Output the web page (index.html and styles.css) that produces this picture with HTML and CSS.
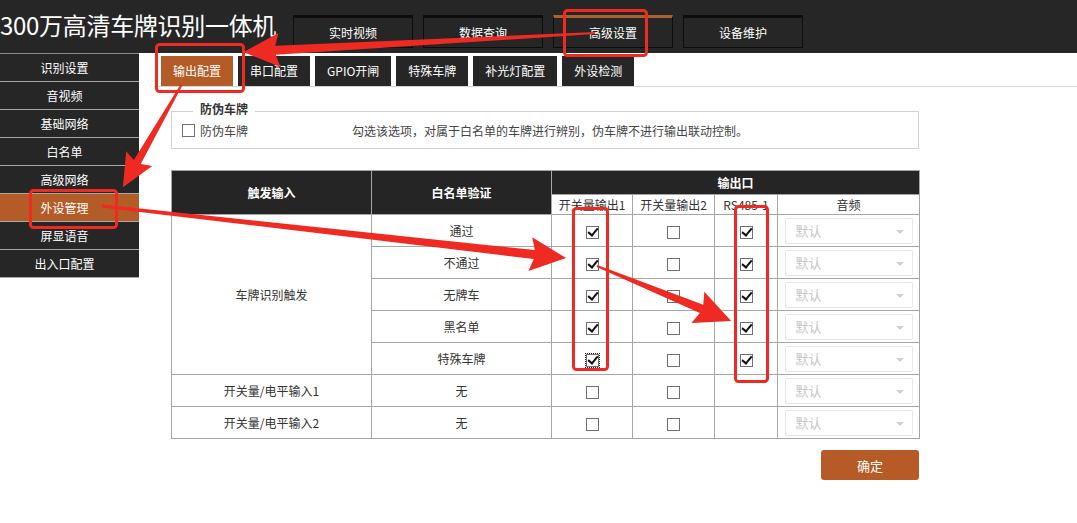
FILE: index.html
```html
<!DOCTYPE html>
<html lang="zh-CN">
<head>
    <meta charset="UTF-8">
    <title>300万高清车牌识别一体机</title>
    <link rel="stylesheet" href="styles.css">
</head>
<body>
    <div class="page">
        <header class="topbar">
            <h1 class="title">300万高清车牌识别一体机</h1>
            <nav class="topnav">
                <a class="topnav-item">实时视频</a>
                <a class="topnav-item">数据查询</a>
                <a class="topnav-item active">高级设置</a>
                <a class="topnav-item">设备维护</a>
            </nav>
        </header>

        <div class="main">
            <ul class="sidebar">
                <li>识别设置</li>
                <li>音视频</li>
                <li>基础网络</li>
                <li>白名单</li>
                <li>高级网络</li>
                <li class="active">外设管理</li>
                <li>屏显语音</li>
                <li>出入口配置</li>
            </ul>

            <div class="content">
                <div class="tabs">
                    <span class="tab active">输出配置</span>
                    <span class="tab">串口配置</span>
                    <span class="tab">GPIO开闸</span>
                    <span class="tab">特殊车牌</span>
                    <span class="tab">补光灯配置</span>
                    <span class="tab">外设检测</span>
                </div>

                <div class="panel">
                    <fieldset class="box">
                        <legend>防伪车牌</legend>
                        <div class="box-row">
                            <label class="box-label"><input type="checkbox" class="chk"> 防伪车牌</label>
                            <span class="hint">勾选该选项，对属于白名单的车牌进行辨别，伪车牌不进行输出联动控制。</span>
                        </div>
                    </fieldset>

                    <table class="grid">
                        <colgroup>
                            <col style="width:200px">
                            <col style="width:180px">
                            <col style="width:81px">
                            <col style="width:82px">
                            <col style="width:63px">
                            <col style="width:142px">
                        </colgroup>
                        <thead>
                            <tr class="head-top">
                                <th rowspan="2">触发输入</th>
                                <th rowspan="2">白名单验证</th>
                                <th colspan="4">输出口</th>
                            </tr>
                            <tr class="head-sub">
                                <td>开关量输出1</td>
                                <td>开关量输出2</td>
                                <td>RS485-1</td>
                                <td>音频</td>
                            </tr>
                        </thead>
                        <tbody>
                            <tr>
                                <td rowspan="5">车牌识别触发</td>
                                <td>通过</td>
                                <td><input type="checkbox" class="chk" checked></td>
                                <td><input type="checkbox" class="chk"></td>
                                <td><input type="checkbox" class="chk" checked></td>
                                <td><div class="select">默认</div></td>
                            </tr>
                            <tr>
                                <td>不通过</td>
                                <td><input type="checkbox" class="chk" checked></td>
                                <td><input type="checkbox" class="chk"></td>
                                <td><input type="checkbox" class="chk" checked></td>
                                <td><div class="select">默认</div></td>
                            </tr>
                            <tr>
                                <td>无牌车</td>
                                <td><input type="checkbox" class="chk" checked></td>
                                <td><input type="checkbox" class="chk"></td>
                                <td><input type="checkbox" class="chk" checked></td>
                                <td><div class="select">默认</div></td>
                            </tr>
                            <tr>
                                <td>黑名单</td>
                                <td><input type="checkbox" class="chk" checked></td>
                                <td><input type="checkbox" class="chk"></td>
                                <td><input type="checkbox" class="chk" checked></td>
                                <td><div class="select">默认</div></td>
                            </tr>
                            <tr>
                                <td>特殊车牌</td>
                                <td><input type="checkbox" class="chk focus" checked></td>
                                <td><input type="checkbox" class="chk"></td>
                                <td><input type="checkbox" class="chk" checked></td>
                                <td><div class="select">默认</div></td>
                            </tr>
                            <tr>
                                <td>开关量/电平输入1</td>
                                <td>无</td>
                                <td><input type="checkbox" class="chk"></td>
                                <td><input type="checkbox" class="chk"></td>
                                <td></td>
                                <td><div class="select">默认</div></td>
                            </tr>
                            <tr>
                                <td>开关量/电平输入2</td>
                                <td>无</td>
                                <td><input type="checkbox" class="chk"></td>
                                <td><input type="checkbox" class="chk"></td>
                                <td></td>
                                <td><div class="select">默认</div></td>
                            </tr>
                        </tbody>
                    </table>

                    <div class="actions">
                        <button class="btn">确定</button>
                    </div>
                </div>
            </div>
        </div>

        <!-- red annotation marks drawn over the page -->
        <svg class="marks" width="1077" height="523" viewBox="0 0 1077 523">
            <g class="mark-box">
                <rect x="564.5" y="10.5" width="82" height="45" rx="3"></rect>
                <rect x="156.5" y="44.5" width="87" height="47" rx="3"></rect>
                <rect x="30.5" y="190.5" width="86" height="37" rx="3"></rect>
                <rect x="573.5" y="208.5" width="34" height="161" rx="3"></rect>
                <rect x="735.5" y="206.5" width="32" height="175" rx="3"></rect>
            </g>
            <g class="mark-arrow">
                <polygon transform="translate(595 33) rotate(176.9)" points="0,-1 320,-4.5 316,-17 352,0 316,17 320,4.5 0,1"></polygon>
                <polygon transform="translate(182 84) rotate(119.8)" points="0,-1 90,-4 86,-15 119,0 86,15 90,4 0,1"></polygon>
                <polygon transform="translate(102 206) rotate(6.4)" points="0,-1.5 435,-4.5 431,-17 467,0 431,17 435,4.5 0,1.5"></polygon>
                <polygon transform="translate(597 266) rotate(22.3)" points="0,-1 113,-4.5 109,-17 145,0 109,17 113,4.5 0,1"></polygon>
            </g>
        </svg>
    </div>
</body>
</html>
```

FILE: styles.css
```css
/* Global */
body {
    margin: 0;
    font-family: "Noto Sans CJK SC", "Noto Sans", sans-serif;
    font-size: 12px;
    color: #333;
    background: #fff;
}

.page {
    position: relative;
    width: 1077px;
    height: 523px;
    overflow: hidden;
}

/* Top bar */
.topbar {
    display: flex;
    height: 53px;
    background-color: #262626;
}

.title {
    flex: none;
    width: 293px;
    margin: 0;
    font-size: 24px;
    font-weight: normal;
    line-height: 50px;
    color: #fff;
    white-space: nowrap;
    letter-spacing: -0.3px;
}

.topnav {
    display: flex;
    gap: 10px;
    align-self: flex-end;
    margin-bottom: 5px;
}

.topnav-item {
    box-sizing: border-box;
    width: 120px;
    height: 33px;
    border: 1px solid #0d0d0d;
    border-top: 3px solid #0d0d0d;
    color: #fff;
    font-size: 12px;
    line-height: 29px;
    text-align: center;
}

.topnav-item.active {
    border-top-color: #a9612f;
}

/* Sidebar + content */
.main {
    display: flex;
    align-items: flex-start;
}

.sidebar {
    flex: none;
    width: 139px;
    margin: 0;
    padding: 0;
    list-style: none;
    background-color: #262626;
    border-top: 1px solid #8a8a8a;
}

.sidebar li {
    height: 27px;
    border-bottom: 1px solid #a8a8a8;
    color: #fff;
    line-height: 27px;
    text-align: center;
    padding-right: 10px;
}

.sidebar li.active {
    background-color: #b45c27;
}

.content {
    flex: 1;
    padding-left: 15px;
}

.tabs {
    display: flex;
    gap: 5px;
    padding: 3px 0 0 7px;
    border-bottom: 1px solid #d4d4d4;
}

.tab {
    height: 30px;
    padding: 0 12px;
    background-color: #262626;
    color: #fff;
    line-height: 30px;
}

.tab.active {
    background-color: #b45c27;
}

.panel {
    width: 748px;
    padding: 0 17px;
}

/* Fieldset */
.box {
    margin: 13px 0 0;
    padding: 0 10px 9px;
    border: 1px solid #d2d2d2;
}

.box legend {
    margin-left: 11px;
    padding: 0 7px 5px;
    font-weight: bold;
    line-height: 17px;
    color: #333;
}

.box-row {
    display: flex;
    align-items: center;
    height: 17px;
}

.box-label {
    display: flex;
    align-items: center;
    gap: 5px;
    width: 170px;
    color: #444;
}

.hint {
    color: #444;
}

/* Checkbox */
.chk {
    appearance: none;
    -webkit-appearance: none;
    position: relative;
    box-sizing: border-box;
    width: 13px;
    height: 13px;
    margin: 0;
    border: 1px solid #707070;
    background: #fff;
    vertical-align: middle;
}

.chk:checked::after {
    content: '';
    position: absolute;
    left: 3px;
    top: -1px;
    width: 4px;
    height: 8px;
    border: solid #111;
    border-width: 0 2px 2px 0;
    transform: rotate(40deg);
}

.chk.focus {
    outline: 1px dotted #222;
    outline-offset: 0;
}

/* Table */
.grid {
    width: 748px;
    margin-top: 21px;
    border-collapse: collapse;
    table-layout: fixed;
    text-align: center;
}

.grid th,
.grid td {
    padding: 0;
    border: 1px solid #a6a6a6;
}

.grid th {
    background-color: #252525;
    color: #fff;
    font-weight: bold;
}

.head-top th {
    height: 23px;
}

.head-sub td {
    height: 19px;
    line-height: 19px;
}

.grid tbody td {
    height: 31px;
}

.select {
    position: relative;
    box-sizing: border-box;
    width: 128px;
    height: 26px;
    margin: 0 auto;
    padding-left: 10px;
    border: 1px solid #e6e6e6;
    border-radius: 2px;
    color: #c6c6c6;
    font-size: 13px;
    line-height: 24px;
    text-align: left;
}

.select::after {
    content: '';
    position: absolute;
    right: 8px;
    top: 11px;
    border-left: 4px solid transparent;
    border-right: 4px solid transparent;
    border-top: 4px solid #d0d0d0;
}

/* Button */
.actions {
    display: flex;
    justify-content: flex-end;
    margin-top: 11px;
}

.btn {
    width: 98px;
    height: 30px;
    border: none;
    border-radius: 3px;
    background-color: #b65b27;
    color: #fff;
    font-family: inherit;
    font-size: 13px;
}

/* Annotation overlay */
.marks {
    position: absolute;
    left: 0;
    top: 0;
    pointer-events: none;
}

.mark-box rect {
    fill: none;
    stroke: #ee2a22;
    stroke-width: 3;
}

.mark-arrow polygon {
    fill: #ee2a22;
}
```
